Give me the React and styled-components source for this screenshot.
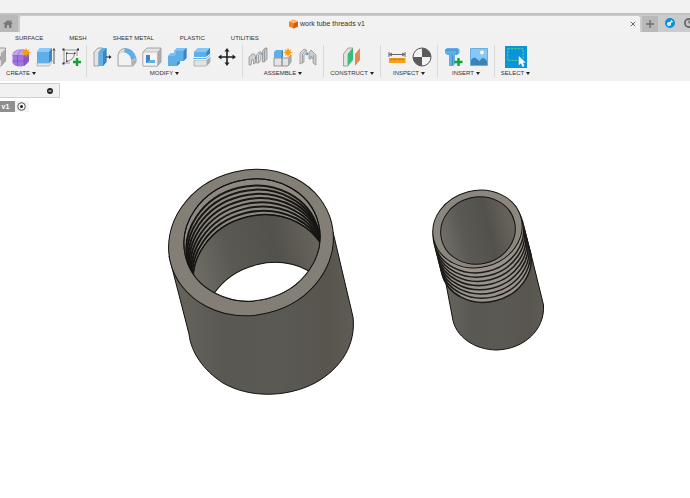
import React from "react";
import styled, { createGlobalStyle } from "styled-components";

const GlobalStyle = createGlobalStyle`
  * { box-sizing: border-box; }
  body { margin: 0; background: #fff; }
  button {
    border: 0;
    padding: 0;
    margin: 0;
    background: none;
    font: inherit;
    color: inherit;
    cursor: pointer;
  }
  svg { display: block; }
`;

const Page = styled.div`
  min-height: 100vh;
  display: flex;
  flex-direction: column;
  overflow: hidden;
  font-family: "Liberation Sans", Arial, sans-serif;
  font-size: 6px;
  line-height: 8px;
  color: #333;
`;

const TitleStrip = styled.div`
  height: 13px;
  background: #f2f2f2;
`;

const TabBar = styled.div`
  display: flex;
  align-items: stretch;
  height: 19px;
  border-top: 2px solid #c2c2c2;
  background: #cbcbcb;
  overflow: hidden;
`;

const TabButton = styled.button`
  display: flex;
  align-items: center;
  justify-content: center;
  flex: none;
  width: ${(p) => p.$width}px;
  margin-top: ${(p) => p.$top || 0}px;
  padding-right: ${(p) => p.$inset || 0}px;
  background: #b9b9b9;
`;

const DocumentTab = styled.div`
  display: flex;
  align-items: center;
  flex: 1;
  margin: 1px 2px 0;
  padding: 0 4px;
  border-radius: 2px 2px 0 0;
  background: #f2f2f2;
`;

const DocumentTitle = styled.div`
  display: flex;
  align-items: center;
  justify-content: center;
  flex: 1;
  gap: 2px;
  font-size: 7px;
  color: #333;
`;

const StatusIcons = styled.div`
  display: flex;
  align-items: center;
  gap: 9px;
  width: 32px;
  padding: 0 0 2px 7px;
  overflow: hidden;

  button { flex: none; }
`;

const Toolbar = styled.div`
  background: #f1f1f1;
  padding-bottom: 4px;
  overflow: hidden;
`;

const MenuTabs = styled.nav`
  display: flex;
  gap: 26px;
  padding: 2px 15px 3px;
`;

const Groups = styled.div`
  display: flex;
  margin-left: -44px;
`;

const Group = styled.section`
  display: flex;
  flex-direction: column;
  align-items: center;
  min-width: ${(p) => (p.$last ? 42 : 57)}px;
  padding: 0 5px;
  border-right: 1px solid ${(p) => (p.$last ? "transparent" : "#d8d8d8")};
`;

const IconRow = styled.div`
  display: flex;
  align-items: center;
  gap: 5px;
  height: 24px;
`;

const ToolButton = styled.button`
  width: 20px;
  height: 20px;

  ${(p) => p.$active && `width: 22px; height: 22px; background: #0a94da;`}
`;

const GroupLabel = styled.button`
  display: flex;
  align-items: center;
  gap: 2px;
  white-space: nowrap;
`;

const Viewport = styled.main`
  position: relative;
  flex: 1;
  background: #fff;
`;

const Model = styled.svg`
  width: 100%;
  height: auto;
`;

const Browser = styled.aside`
  position: absolute;
  top: 2px;
  left: 0;
`;

const BrowserHeader = styled.div`
  display: flex;
  align-items: center;
  justify-content: flex-end;
  width: 60px;
  height: 15px;
  padding-right: 6px;
  border: 1px solid #d0d0d0;
  border-left: 0;
  background: #f1f1f1;
`;

const BrowserRow = styled.div`
  display: flex;
  width: 29px;
  height: 11px;
  margin-top: 3px;
  background: #f3f3f3;
`;

const Version = styled.button`
  width: 15px;
  padding-right: 4px;
  text-align: center;
  background: #8f8f8f;
  color: #fff;
  font-weight: bold;
  font-size: 7px;
`;

const RowToggle = styled.button`
  padding: 1px 2px;
`;

const grey = "#e3e3e3";
const dark = "#858585";
const blue = "#5eaee8";
const deep = "#3b86c2";

function Spark({ x, y }) {
  return (
    <path
      transform={`translate(${x} ${y})`}
      d="M0-5 1-2.1 3.5-3.5 2.1-1 5 0 2.1 1 3.5 3.5 1 2.1 0 5-1 2.1-3.5 3.5-2.1 1-5 0-2.1-1-3.5-3.5-1-2.1Z"
      fill="#f79a0b"
    />
  );
}

function Plus({ x, y }) {
  return <path transform={`translate(${x} ${y})`} d="M0-4V4M-4 0H4" stroke="#13a037" strokeWidth="2.4" />;
}

const icons = {
  sketch: <path d="M3 4H17V17H3Z" fill="none" stroke="#555" />,
  hole: (
    <g>
      <path d="M2 5 7 1H19.500V14L15 19H2Z" fill={grey} stroke={dark} strokeWidth=".8" />
      <path d="M15 6 19.500 2V14L15 19Z" fill="#aaa" />
      <ellipse cx="12" cy="11" rx="3" ry="3.500" fill="#999" />
    </g>
  ),
  form: (
    <g>
      <path d="M1.500 7Q3 3 8 2.500H13Q18 4 18 8V14Q15 19 10 19.500Q4 20 1.500 16Z" fill="#a274df" />
      <path d="M2 7Q5 3 9 3T17 5L13 9H2Z" fill="#c5a6f0" />
      <path d="M13 9 18 6V14L13 19Z" fill="#8a58cb" />
      <path d="M1.500 8.500H14L18 5M1.500 14H13.500L18 11M6.500 19V8L10 3M13 19V9" fill="none" stroke="#7a4abb" strokeWidth=".6" />
      <Spark x={15} y={5.500} />
    </g>
  ),
  extrude: (
    <g>
      <path d="M1 16H13L16 13V15L13 19H1Z" fill="#e5e5e5" stroke="#999" strokeWidth=".6" />
      <path d="M1 5 4 1H16V13L13 16H1Z" fill={blue} />
      <path d="M1 5 4 1H16L13 5Z" fill="#8acbf5" />
      <path d="M13 5 16 1V13L13 16Z" fill={deep} />
      <path d="M18 2V17M17 3.500 18 1.500 19 3.500" fill="none" stroke="#444" strokeWidth=".9" />
    </g>
  ),
  createSketch: (
    <g>
      <path d="M3 3H16V9M3 3V16H9" fill="none" stroke="#777" strokeWidth=".7" />
      <path d="M5.500 14.500V6.500H13.500Q13 13 5.500 14.500Z" fill="none" stroke="#555" strokeWidth=".7" />
      <path d="M1.500 1.500h2v2h-2zM16 1.500h2v2h-2zM1.500 15.500h2v2h-2zM5 5.500h1.500V7H5zM13 5.500h1.500V7H13zM5 13.500h1.500V15H5z" fill="#333" />
      <Plus x={16} y={15} />
    </g>
  ),
  pressPull: (
    <g>
      <path d="M2 5 6 1H11L7 5V19H2Z" fill={grey} stroke={dark} strokeWidth=".7" />
      <path d="M6.500 5 10 1H14.500V15L11 19H6.500Z" fill={blue} />
      <path d="M11 5 14.500 1V15L11 19Z" fill={deep} />
      <path d="M14 10H18" stroke="#222" />
      <path d="M17 8 19.500 10 17 12Z" fill="#222" />
    </g>
  ),
  fillet: (
    <g>
      <path d="M1 8Q2 2 8 1.500Q15 2 19 11V15L16 19H1Z" fill={grey} stroke={dark} strokeWidth=".7" />
      <path d="M1.500 8Q2 5 5 5Q13 5 14.500 12V18.500H1.500Z" fill="#f2f2f2" stroke="#aaa" strokeWidth=".4" />
      <path d="M8 1.500Q17 1 19 11L14.500 13.500Q13 6 7 5Z" fill={blue} />
      <path d="M14.500 14 19 11.500V15L16 19H14.500Z" fill="#b2b2b2" />
    </g>
  ),
  shell: (
    <g>
      <path d="M1 5 5 1H19V15L15.500 19H1Z" fill={grey} stroke={dark} strokeWidth=".7" />
      <path d="M15.500 5 19 1V15L15.500 19Z" fill="#aaa" />
      <path d="M1 5H15.500V19H1Z" fill="#f2f2f2" stroke="#999" strokeWidth=".5" />
      <path d="M4 8H13V16H4Z" fill="#a8a8a8" />
      <path d="M8 8H13V13H8Z" fill="#f6f6f6" />
      <path d="M4 8H8V13H13V16H4Z" fill={blue} />
      <path d="M4 8H8V13L4 16Z" fill={deep} />
    </g>
  ),
  combine: (
    <g>
      <path d="M1 9 4 6H7V4L10 1H19.500V11L16.500 14H13V16L10 19H1Z" fill={blue} />
      <path d="M1 9 4 6H7V4L10 1H19.500L16.500 4H9V7L7 9Z" fill="#7cc1f2" />
      <path d="M16.500 4 19.500 1V11L16.500 14Z" fill={deep} />
      <path d="M10 16 13 14V16L10 19Z" fill={deep} />
    </g>
  ),
  split: (
    <g>
      <path d="M2 5 6 1H18V7L14.500 10H2Z" fill={blue} />
      <path d="M2 5 6 1H18L14.500 5Z" fill="#86c8f5" />
      <path d="M14.500 5 18 1V7L14.500 10Z" fill={deep} />
      <path d="M2 13H14.500L18 9.500V15L14.500 19H2Z" fill={grey} stroke="#999" strokeWidth=".6" />
      <path d="M14.500 13 18 10V15L14.500 19Z" fill="#aaa" />
      <path d="M1 11.500H14L18.500 8" fill="none" stroke="#fff" strokeWidth="2.500" />
      <path d="M1 11.500H14L18.500 8" fill="none" stroke={blue} />
    </g>
  ),
  move: (
    <g fill="#222">
      <path d="M10 3V17M3 10H17" stroke="#222" strokeWidth="1.600" />
      <path d="M10 1 12.500 4.500H7.500ZM10 19 7.500 15.500H12.500ZM1 10 4.500 7.500V12.500ZM19 10 15.500 12.500V7.500Z" />
    </g>
  ),
  component: (
    <g stroke="#8a8a8a" strokeWidth=".7">
      <path d="M1 18V10L4 7Q7 6 7.500 9V16L5.500 17V13L4 12.500 3 18Z" fill="#cfcfcf" />
      <path d="M8.500 16V8L11 5H13V13L10.500 16Z" fill="#dedede" />
      <path d="M14.500 13V4L17 1H19V12L16.500 15H14.500Z" fill="#c8c8c8" />
      <path d="M10.500 16V8L13 5M16.500 14V4L19 1" fill="none" />
      <path d="M7 11H8.500M13.500 7H15" stroke="#3e92d2" strokeWidth="1.500" />
    </g>
  ),
  newComponent: (
    <g>
      <path d="M1 11H9V19H1ZM9 11H15L18 8V15L15 19H9Z" fill="#e4e4e4" stroke="#858585" strokeWidth=".8" />
      <path d="M15 11 18 8V15L15 19Z" fill="#aaa" />
      <path d="M1 5 3 3H10V10L8.500 11H1Z" fill={blue} />
      <path d="M8.500 5 10 3V10L8.500 11Z" fill={deep} />
      <Spark x={15} y={5.500} />
    </g>
  ),
  joint: (
    <g stroke="#8a8a8a" strokeWidth=".7">
      <path d="M2 17V6L6 2Q9 2 9 6L6 8V15Z" fill="#d8d8d8" />
      <path d="M11 12V6L13 3 18 8V18L15 16V12L13 9V12Z" fill="#cdcdcd" />
      <path d="M4.500 16V7L8 3M15.500 12V8" fill="none" />
      <path d="M8.500 8 10 6" stroke="#3e92d2" strokeWidth="1.500" />
    </g>
  ),
  plane: (
    <g>
      <path d="M1.500 7 6 1H11L6 7V19H1.500Z" fill={grey} stroke={dark} strokeWidth=".7" />
      <path d="M6 7 11 1V13L6 19Z" fill="#36be77" />
      <path d="M13 7 18 1V13L13 19Z" fill="#e68a52" />
    </g>
  ),
  measure: (
    <g>
      <path d="M2 5V10M18 5V10M2.500 7.500H17.500M5 6 2.500 7.500 5 9M15 6 17.500 7.500 15 9" fill="none" stroke="#555" strokeWidth=".9" />
      <path d="M2 11H18.500V16H2Z" fill="#f6a21c" />
      <path d="M4 11.500V13.500M6 11.500V13M8 11.500V13.500M10 11.500V13M12 11.500V13.500M14 11.500V13M16 11.500V13.500" stroke="#9b5d00" strokeWidth=".7" />
    </g>
  ),
  mass: (
    <g>
      <circle cx="10" cy="10" r="9" fill="#f4f4f4" stroke="#555" />
      <path d="M10 1A9 9 0 0 1 19 10H10ZM10 19A9 9 0 0 1 1 10H10Z" fill="#5b5b5b" />
    </g>
  ),
  bolt: (
    <g>
      <path d="M1 3 3 1H14L15.500 3V6L13 8H11V17L9 19H5V8H3L1 6Z" fill={blue} />
      <path d="M1 3H13V7.500M8.500 8V18.500" fill="none" stroke="#3b86c2" strokeWidth=".8" />
      <Plus x={14.5} y={15} />
    </g>
  ),
  picture: (
    <g>
      <path d="M1.500 1.500H18.500V18.500H1.500Z" fill="#83c8f6" stroke="#4d98cd" strokeWidth=".7" />
      <circle cx="13" cy="5.500" r="2" fill="#fff8df" />
      <path d="M2 13Q5 8 9 13L10.500 14Q14 8 18 14V18H2Z" fill="#3c83bc" />
    </g>
  ),
  select: (
    <g>
      <path d="M2.500 2.500H16.500V13H2.500Z" fill="none" stroke="#6bd36a" strokeWidth=".9" strokeDasharray="2 1" />
      <path d="M12.500 9V17.500L14.500 15.700 16 19 17.700 18.200 16.200 15.200H18.800Z" fill="#fff" />
    </g>
  ),
};

const groups = [
  { label: "CREATE", tools: ["sketch", "hole", "form", "extrude", "createSketch"] },
  { label: "MODIFY", tools: ["pressPull", "fillet", "shell", "combine", "split", "move"] },
  { label: "ASSEMBLE", tools: ["component", "newComponent", "joint"] },
  { label: "CONSTRUCT", tools: ["plane"] },
  { label: "INSPECT", tools: ["measure", "mass"] },
  { label: "INSERT", tools: ["bolt", "picture"] },
  { label: "SELECT", tools: ["select"] },
];

const menus = ["SURFACE", "MESH", "SHEET METAL", "PLASTIC", "UTILITIES"];

function Ellipse({ cx, cy, rx, ry, ...rest }) {
  return <ellipse cx={cx} cy={cy} rx={rx} ry={ry} transform={`rotate(-14 ${cx} ${cy})`} {...rest} />;
}

function Coupling() {
  const rings = Array.from({ length: 8 }, (_, i) => i / 7);
  return (
    <g stroke="#111" strokeWidth="1">
      <path
        d="M169 256 189 334C191 352 203 370 223 383C249 398 286 398 315 383C342 368 356 344 353 317L333 232Z"
        fill="url(#wall)"
      />
      <Ellipse cx={251} cy={242.5} rx={83} ry={72.5} fill="#837f76" />
      <clipPath id="bore">
        <Ellipse cx={252} cy={240} rx={68.5} ry={60.5} />
      </clipPath>
      <Ellipse cx={252} cy={240} rx={68.5} ry={60.5} fill="#8d8980" />
      <g clipPath="url(#bore)">
        {rings.map((t) => (
          <Ellipse key={t} cx={253 + 8 * t} cy={246 + 29.5 * t} rx={67 + t} ry={60} fill="#8e8a81" stroke="#171614" strokeWidth="2" />
        ))}
        <Ellipse cx={261} cy={275.5} rx={68} ry={60} fill="url(#bore-wall)" />
        <Ellipse cx={271} cy={323} rx={68} ry={60} fill="#fff" />
      </g>
      <Ellipse cx={252} cy={240} rx={68.5} ry={60.5} fill="none" />
    </g>
  );
}

function Nipple() {
  const rings = Array.from({ length: 8 }, (_, i) => (7 - i) / 7);
  return (
    <g stroke="#111" strokeWidth="1">
      <path
        d="M443 268 452.500 318C455 336 474 350 497 350C524 349 545 330 543.500 305L530 250Z"
        fill="url(#wall)"
      />
      {rings.map((t) => (
        <Ellipse key={t} cx={478.500 + 7.500 * t} cy={233 + 29.500 * t} rx={45.500} ry={39.500} fill="#98938a" stroke="#1b1a18" strokeWidth="1.500" />
      ))}
      <Ellipse cx={477.5} cy={229} rx={45} ry={38.5} fill="#8b877e" />
      <Ellipse cx={478} cy={230.5} rx={37.5} ry={33.5} fill="url(#bore-wall)" />
    </g>
  );
}

export default function App() {
  return (
    <Page>
      <GlobalStyle />
      <TitleStrip />
      <TabBar>
        <TabButton $width={18} $inset={3} aria-label="Home">
          <svg width="10" height="8" viewBox="0 0 10 8">
            <path d="M5 0 10 4H8.500V8H6V5H4V8H1.500V4H0ZM7 .5H8.500V3H7Z" fill="#777" />
          </svg>
        </TabButton>
        <DocumentTab>
          <DocumentTitle>
            <svg width="9" height="10" viewBox="0 0 9 10">
              <path d="M0 2.500 4.500.5 9 2.500V7.500L4.500 9.500 0 7.500Z" fill="#f58220" />
              <path d="M0 2.500 4.500.5 9 2.500 4.500 4.500Z" fill="#ffb866" />
              <path d="M4.500 4.500 9 2.500V7.500L4.500 9.500Z" fill="#dc5b0c" />
            </svg>
            <span>work tube threads v1</span>
          </DocumentTitle>
          <button aria-label="Close tab">
            <svg width="6" height="6" viewBox="0 0 6 6">
              <path d="M.8.8 5.200 5.200M5.200.8.8 5.200" stroke="#555" strokeWidth=".9" />
            </svg>
          </button>
        </DocumentTab>
        <TabButton $width={16} $top={1} aria-label="New tab">
          <svg width="8" height="8" viewBox="0 0 8 8">
            <path d="M4 0V8M0 4H8" stroke="#6c6c6c" strokeWidth="1.300" />
          </svg>
        </TabButton>
        <StatusIcons>
          <button aria-label="Extensions">
            <svg width="10" height="10" viewBox="0 0 10 10">
              <circle cx="5" cy="5" r="5" fill="#0a8fd8" />
              <circle cx="4" cy="6" r="2" fill="#fff" />
              <path d="M5 5 7 3M6 2.500 7.500 4" stroke="#fff" strokeWidth="1.300" />
              <circle cx="4" cy="6" r=".6" fill="#0a8fd8" />
            </svg>
          </button>
          <button aria-label="Job status">
            <svg width="10" height="10" viewBox="0 0 10 10">
              <circle cx="5" cy="5" r="5" fill="#666" />
              <circle cx="5" cy="5" r="3.200" fill="#c4c4c4" />
              <path d="M5 2.500V5H7" fill="none" stroke="#555" />
            </svg>
          </button>
        </StatusIcons>
      </TabBar>
      <Toolbar>
        <MenuTabs>
          {menus.map((m) => (
            <button key={m}>{m}</button>
          ))}
        </MenuTabs>
        <Groups>
          {groups.map((g) => (
            <Group key={g.label} $last={g.label === "SELECT"}>
              <IconRow>
                {g.tools.map((t) => (
                  <ToolButton key={t} aria-label={t} $active={t === "select"}>
                    <svg width="100%" height="100%" viewBox="0 0 20 20">{icons[t]}</svg>
                  </ToolButton>
                ))}
              </IconRow>
              <GroupLabel>
                {g.label}
                <svg width="4" height="3" viewBox="0 0 4 3">
                  <path d="M0 0H4L2 3Z" fill="#222" />
                </svg>
              </GroupLabel>
            </Group>
          ))}
        </Groups>
      </Toolbar>
      <Viewport>
        <Model viewBox="0 81 690 417" role="img" aria-label="Threaded tube model">
          <defs>
            <linearGradient id="wall">
              <stop offset="0" stopColor="#68655e" />
              <stop offset=".3" stopColor="#595852" />
              <stop offset=".6" stopColor="#5a5953" />
              <stop offset=".85" stopColor="#58554e" />
              <stop offset="1" stopColor="#5f5c56" />
            </linearGradient>
            <linearGradient id="bore-wall">
              <stop offset="0" stopColor="#716e66" />
              <stop offset=".3" stopColor="#5a5953" />
              <stop offset=".65" stopColor="#53514b" />
              <stop offset="1" stopColor="#69665e" />
            </linearGradient>
          </defs>
          <Coupling />
          <Nipple />
        </Model>
        <Browser>
          <BrowserHeader>
            <button aria-label="Collapse browser">
              <svg width="6" height="6" viewBox="0 0 6 6">
                <circle cx="3" cy="3" r="3" fill="#222" />
                <path d="M1.500 3H4.500" stroke="#fff" />
              </svg>
            </button>
          </BrowserHeader>
          <BrowserRow>
            <Version>v1</Version>
            <RowToggle aria-label="Activate component">
              <svg width="9" height="9" viewBox="0 0 9 9">
                <circle cx="4.500" cy="4.500" r="3.800" fill="none" stroke="#444" strokeWidth=".9" />
                <circle cx="4.500" cy="4.500" r="1.500" fill="#222" />
              </svg>
            </RowToggle>
          </BrowserRow>
        </Browser>
      </Viewport>
    </Page>
  );
}
